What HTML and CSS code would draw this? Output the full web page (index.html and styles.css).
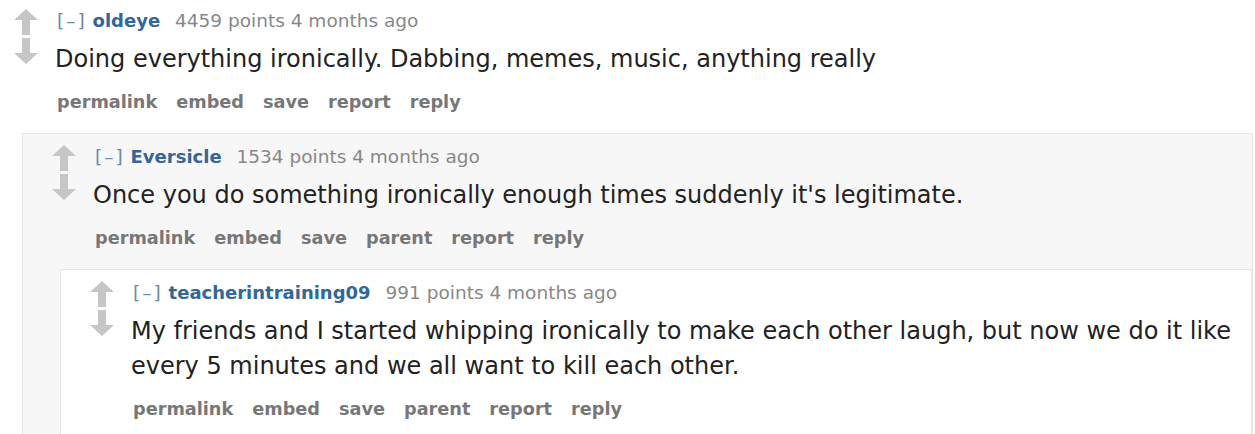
FILE: index.html
```html
<!DOCTYPE html>
<html>
  <head>
    <title>Comments</title>
    <link rel="stylesheet" href="styles.css">
  </head>
  <body>
    <div class="thread">

      <div class="comment">
        <div class="row">
          <div class="votes">
            <svg class="arrow" width="24" height="26" viewBox="0 0 24 26"><path d="M12 0 L24 11 H16 V26 H8 V11 H0 Z"/></svg>
            <svg class="arrow" width="24" height="26" viewBox="0 0 24 26"><path d="M8 0 H16 V15 H24 L12 26 L0 15 H8 Z"/></svg>
          </div>
          <div class="entry">
            <p class="tagline"><span class="expand">[&ndash;]</span> <a class="author">oldeye</a> <span class="score">4459 points</span> 4 months ago</p>
            <p class="body">Doing everything ironically. Dabbing, memes, music, anything really</p>
            <ul class="buttons">
              <li>permalink</li>
              <li>embed</li>
              <li>save</li>
              <li>report</li>
              <li>reply</li>
            </ul>
          </div>
        </div>

        <div class="child">
          <div class="comment">
            <div class="row">
              <div class="votes">
                <svg class="arrow" width="24" height="26" viewBox="0 0 24 26"><path d="M12 0 L24 11 H16 V26 H8 V11 H0 Z"/></svg>
                <svg class="arrow" width="24" height="26" viewBox="0 0 24 26"><path d="M8 0 H16 V15 H24 L12 26 L0 15 H8 Z"/></svg>
              </div>
              <div class="entry">
                <p class="tagline"><span class="expand">[&ndash;]</span> <a class="author">Eversicle</a> <span class="score">1534 points</span> 4 months ago</p>
                <p class="body">Once you do something ironically enough times suddenly it's legitimate.</p>
                <ul class="buttons">
                  <li>permalink</li>
                  <li>embed</li>
                  <li>save</li>
                  <li>parent</li>
                  <li>report</li>
                  <li>reply</li>
                </ul>
              </div>
            </div>

            <div class="child">
              <div class="comment">
                <div class="row">
                  <div class="votes">
                    <svg class="arrow" width="24" height="26" viewBox="0 0 24 26"><path d="M12 0 L24 11 H16 V26 H8 V11 H0 Z"/></svg>
                    <svg class="arrow" width="24" height="26" viewBox="0 0 24 26"><path d="M8 0 H16 V15 H24 L12 26 L0 15 H8 Z"/></svg>
                  </div>
                  <div class="entry">
                    <p class="tagline"><span class="expand">[&ndash;]</span> <a class="author">teacherintraining09</a> <span class="score">991 points</span> 4 months ago</p>
                    <p class="body">My friends and I started whipping ironically to make each other laugh, but now we do it like every 5 minutes and we all want to kill each other.</p>
                    <ul class="buttons">
                      <li>permalink</li>
                      <li>embed</li>
                      <li>save</li>
                      <li>parent</li>
                      <li>report</li>
                      <li>reply</li>
                    </ul>
                  </div>
                </div>
              </div>
            </div>

          </div>
        </div>
      </div>

    </div>
  </body>
</html>
```

FILE: styles.css
```css
body {
  margin: 0;
  background-color: #fff;
  font-family: "DejaVu Sans", Verdana, sans-serif;
  color: #222;
}

.thread {
  padding: 0 2px 0 14px;
}

.comment {
  padding-top: 7px;
}

.row {
  display: flex;
  padding-bottom: 19px;
}

.votes {
  flex: none;
  width: 41px;
  display: flex;
  flex-direction: column;
  gap: 3px;
  padding-top: 2px;
}

.arrow {
  display: block;
  fill: #c6c6c6;
}

.entry {
  flex: 1;
  min-width: 0;
}

.tagline {
  margin: 0 0 0 2px;
  font-size: 18.5px;
  line-height: 27px;
  color: #888;
}

.expand {
  color: #6b8ab0;
  letter-spacing: 2px;
}

.author {
  color: #369;
  font-weight: bold;
  font-size: 18px;
  margin-right: 9px;
}

.body {
  margin: 8px 0 0;
  font-size: 24px;
  line-height: 35px;
  color: #222;
}

.buttons {
  list-style: none;
  margin: 13px 0 0 2px;
  padding: 0;
  display: flex;
  gap: 19px;
  font-size: 17.7px;
  line-height: 24px;
  font-weight: bold;
  color: #777;
}

.child {
  margin-left: 8px;
  padding: 2px 0 0 29px;
  border: 1px solid #e6e6e6;
  border-bottom: none;
  background-color: #f7f7f7;
}

.child .child {
  background-color: #fff;
}
```
